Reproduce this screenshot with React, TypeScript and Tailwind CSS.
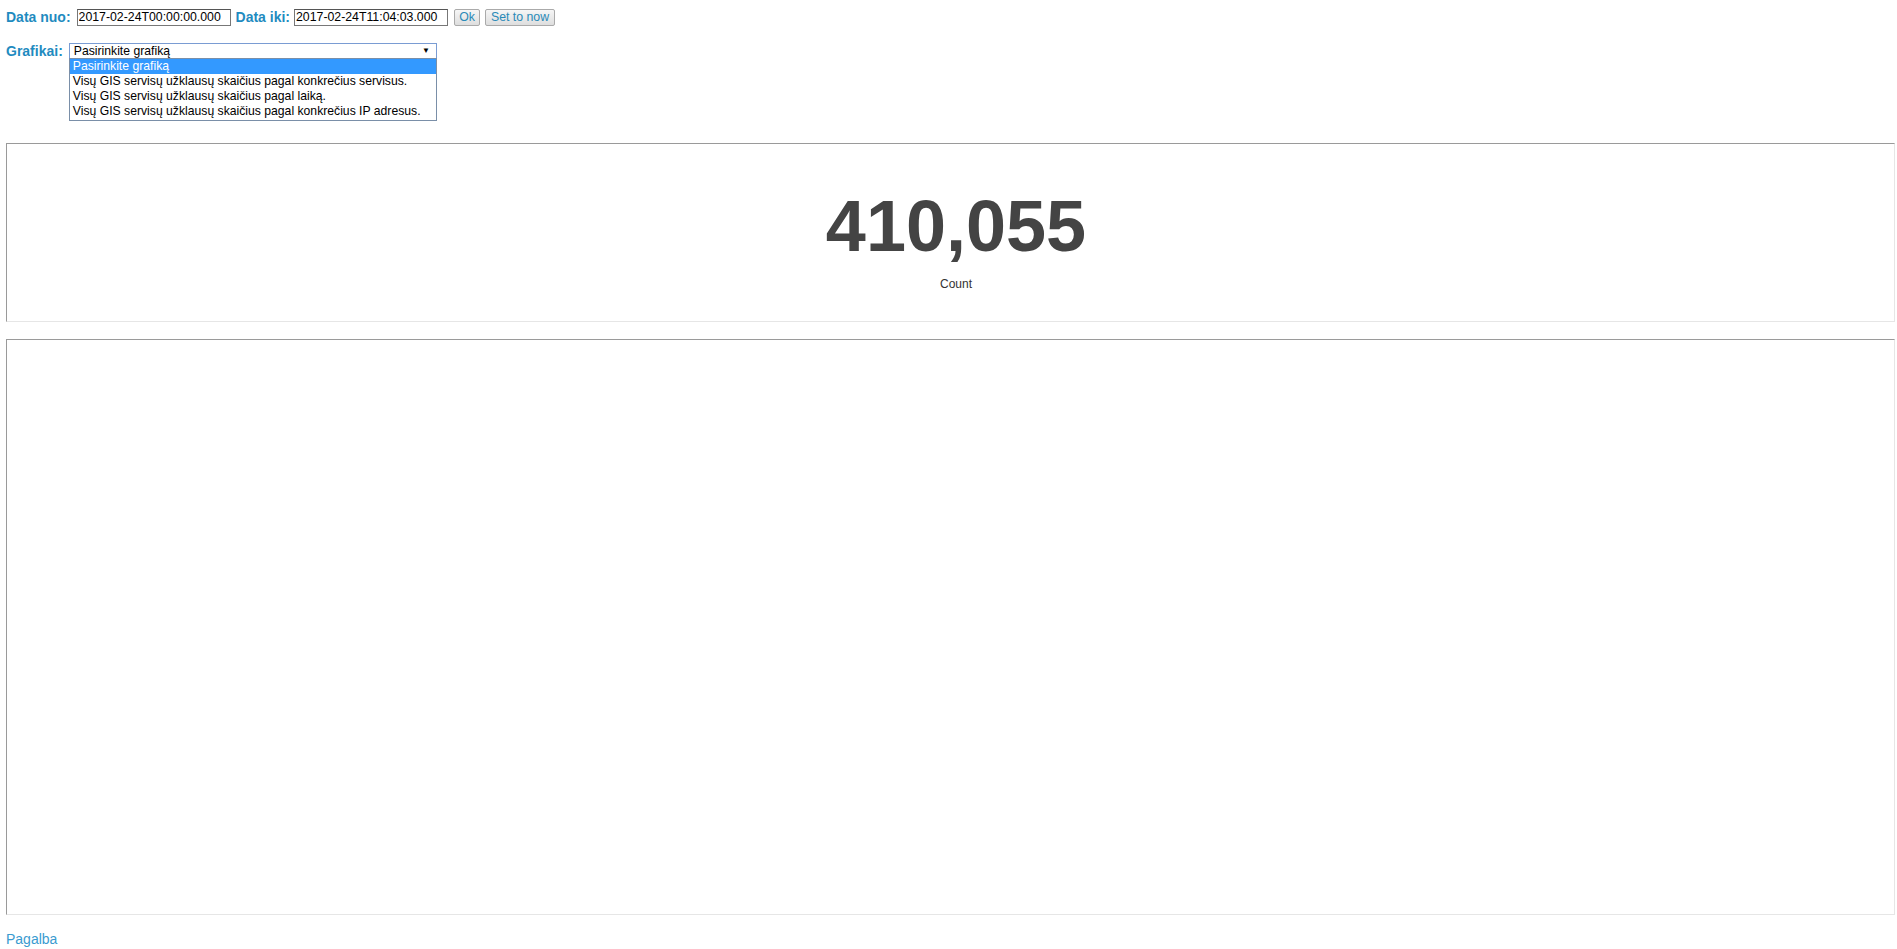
import React from 'react';

const options = [
  'Pasirinkite grafiką',
  'Visų GIS servisų užklausų skaičius pagal konkrečius servisus.',
  'Visų GIS servisų užklausų skaičius pagal laiką.',
  'Visų GIS servisų užklausų skaičius pagal konkrečius IP adresus.',
];

const App: React.FC = () => {
  const labelClass = "text-[14px] font-bold text-[#1f8bc0] leading-none";
  const inputClass = "h-[17px] w-[154px] border border-[#777] border-t-[#555] bg-white px-[1px] text-[12.3px] text-black leading-none outline-none";
  const buttonClass = "h-[17px] border border-[#aaa] rounded-[2px] bg-gradient-to-b from-[#f6f6f6] to-[#dedede] text-[12.3px] text-[#2a8ab8] leading-none flex items-center justify-center";

  return (
    <div className="min-h-screen w-full bg-white font-['Liberation_Sans',Arial,sans-serif]">
      {/* Date range */}
      <div className="pt-[8px] pl-[6px] flex items-center h-[26px]">
        <span className={labelClass}>Data nuo:</span>
        <input className={inputClass + " ml-[6px]"} defaultValue="2017-02-24T00:00:00.000" />
        <span className={labelClass + " ml-[5px]"}>Data iki:</span>
        <input className={inputClass + " ml-[4px]"} defaultValue="2017-02-24T11:04:03.000" />
        <button className={buttonClass + " ml-[6px] w-[26px]"}>Ok</button>
        <button className={buttonClass + " ml-[5px] w-[70px]"}>Set to now</button>
      </div>

      {/* Chart select */}
      <div className="mt-[17px] pl-[6px] flex items-center h-[16px]">
        <span className={labelClass}>Grafikai:</span>
        <div className="relative ml-[6px]">
          <div className="h-[16px] w-[368px] border border-[#7a9cd3] bg-white flex items-center justify-between pl-[4px] pr-[6px]">
            <span className="text-[12.2px] text-black leading-none">Pasirinkite grafiką</span>
            <span className="text-[8px] text-black leading-none">▼</span>
          </div>
          <div className="absolute left-0 top-[15px] w-[368px] border border-[#7a8fa8] bg-white pb-[1px] z-10">
            {options.map((o, i) => (
              <div
                key={o}
                className={
                  "h-[15px] pl-[3px] flex items-center text-[12.2px] leading-none " +
                  (i === 0 ? "bg-[#3399ff] text-white" : "text-black")
                }
              >
                {o}
              </div>
            ))}
          </div>
        </div>
      </div>

      {/* Metric panel */}
      <div className="mt-[84px] ml-[6px] mr-[2px] h-[179px] border border-t-[#9a9a9a] border-l-[#9a9a9a] border-r-[#e6e6e6] border-b-[#e6e6e6]">
        <div className="pt-[46px] pl-[11px] flex flex-col items-center">
          <div className="text-[72px] font-bold text-[#444] leading-none">410,055</div>
          <div className="mt-[15px] text-[12px] text-[#333] leading-[14px]">Count</div>
        </div>
      </div>

      {/* Chart panel */}
      <div className="mt-[17px] ml-[6px] mr-[2px] h-[576px] border border-t-[#9a9a9a] border-l-[#9a9a9a] border-r-[#e6e6e6] border-b-[#e6e6e6]" />

      <div className="mt-[12px] pl-[6px]">
        <a className="text-[14px] text-[#3a9bd0] leading-[16px] cursor-pointer">Pagalba</a>
      </div>
    </div>
  );
};

export default App;
